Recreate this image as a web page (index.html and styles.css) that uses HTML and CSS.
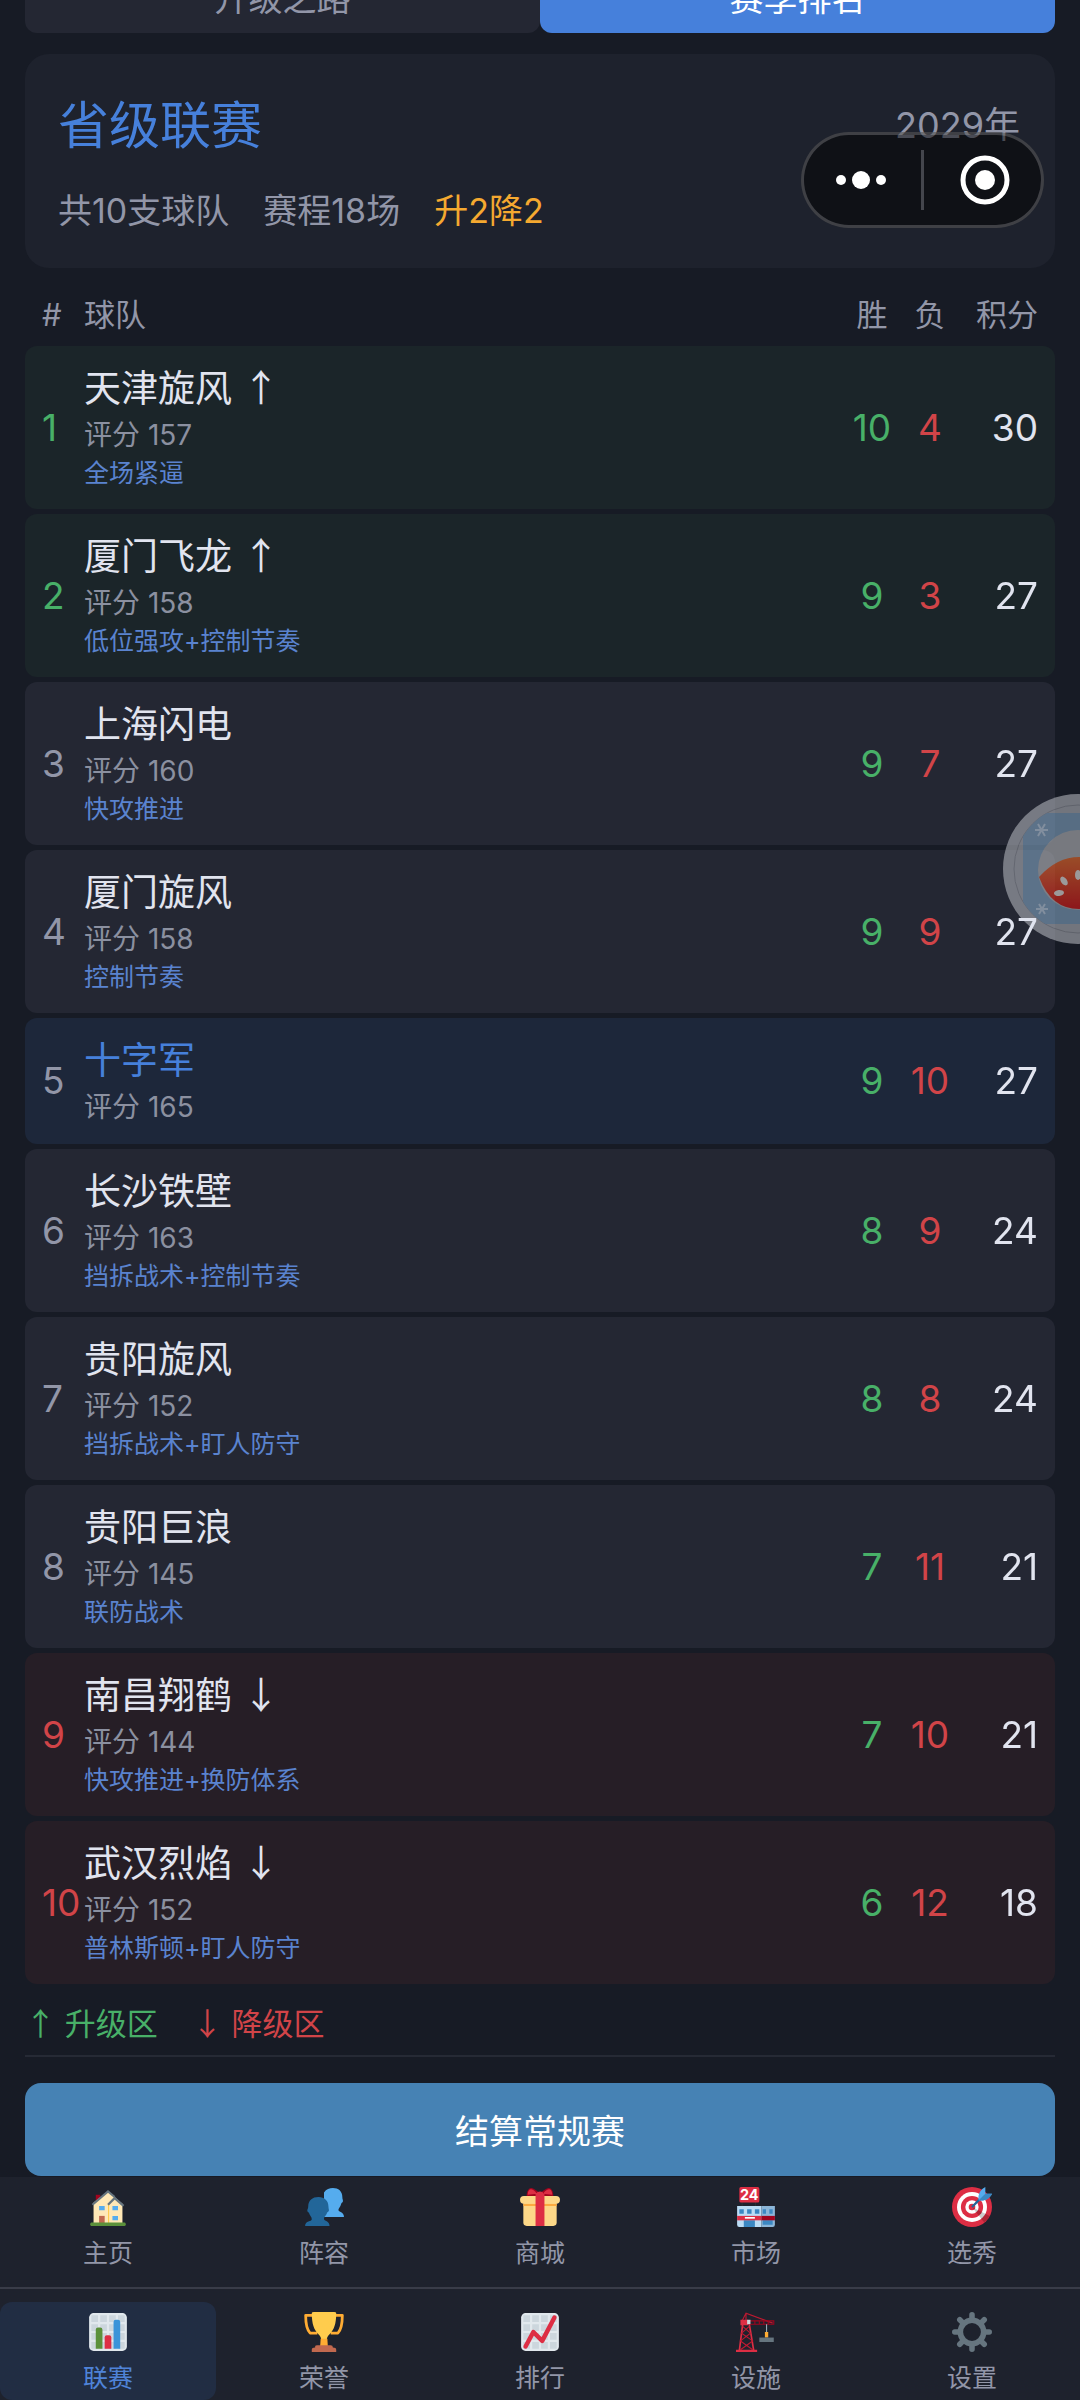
FILE: index.html
```html
<!DOCTYPE html>
<html lang="zh-CN">
<head>
  <meta charset="UTF-8" />
  <title>省级联赛 | 赛季排名</title>
  <meta name="viewport" content="width=device-width, initial-scale=1.0" />
  <link rel="stylesheet" href="styles.css">
</head>
<body>
  <main class="page">
    <div class="tabs">
      <button type="button" class="tab">升级之路</button>
      <button type="button" class="tab tab-active">赛季排名</button>
    </div>

    <section class="league">
      <div class="league-top">
        <h1>省级联赛</h1>
        <span class="year">2029年</span>
      </div>
      <div class="league-info">
        <span>共10支球队</span>
        <span>赛程18场</span>
        <span class="rule">升2降2</span>
      </div>
    </section>

    <table class="ranking">
      <thead>
        <tr>
          <th class="pos">#</th>
          <th class="team">球队</th>
          <th class="win">胜</th>
          <th class="lose">负</th>
          <th class="points">积分</th>
        </tr>
      </thead>
      <tbody>
        <tr class="up">
          <td class="pos">1</td>
          <td class="team"><div class="name">天津旋风 <span class="arrow">↑</span></div><div class="rating">评分 157</div><div class="tactic">全场紧逼</div></td>
          <td class="win">10</td><td class="lose">4</td><td class="points"><span>30</span></td>
        </tr>
        <tr class="up">
          <td class="pos">2</td>
          <td class="team"><div class="name">厦门飞龙 <span class="arrow">↑</span></div><div class="rating">评分 158</div><div class="tactic">低位强攻+控制节奏</div></td>
          <td class="win">9</td><td class="lose">3</td><td class="points"><span>27</span></td>
        </tr>
        <tr>
          <td class="pos">3</td>
          <td class="team"><div class="name">上海闪电</div><div class="rating">评分 160</div><div class="tactic">快攻推进</div></td>
          <td class="win">9</td><td class="lose">7</td><td class="points"><span>27</span></td>
        </tr>
        <tr>
          <td class="pos">4</td>
          <td class="team"><div class="name">厦门旋风</div><div class="rating">评分 158</div><div class="tactic">控制节奏</div></td>
          <td class="win">9</td><td class="lose">9</td><td class="points"><span>27</span></td>
        </tr>
        <tr class="mine">
          <td class="pos">5</td>
          <td class="team"><div class="name">十字军</div><div class="rating">评分 165</div></td>
          <td class="win">9</td><td class="lose">10</td><td class="points"><span>27</span></td>
        </tr>
        <tr>
          <td class="pos">6</td>
          <td class="team"><div class="name">长沙铁壁</div><div class="rating">评分 163</div><div class="tactic">挡拆战术+控制节奏</div></td>
          <td class="win">8</td><td class="lose">9</td><td class="points"><span>24</span></td>
        </tr>
        <tr>
          <td class="pos">7</td>
          <td class="team"><div class="name">贵阳旋风</div><div class="rating">评分 152</div><div class="tactic">挡拆战术+盯人防守</div></td>
          <td class="win">8</td><td class="lose">8</td><td class="points"><span>24</span></td>
        </tr>
        <tr>
          <td class="pos">8</td>
          <td class="team"><div class="name">贵阳巨浪</div><div class="rating">评分 145</div><div class="tactic">联防战术</div></td>
          <td class="win">7</td><td class="lose">11</td><td class="points"><span>21</span></td>
        </tr>
        <tr class="down">
          <td class="pos">9</td>
          <td class="team"><div class="name">南昌翔鹤 <span class="arrow">↓</span></div><div class="rating">评分 144</div><div class="tactic">快攻推进+换防体系</div></td>
          <td class="win">7</td><td class="lose">10</td><td class="points"><span>21</span></td>
        </tr>
        <tr class="down">
          <td class="pos">10</td>
          <td class="team"><div class="name">武汉烈焰 <span class="arrow">↓</span></div><div class="rating">评分 152</div><div class="tactic">普林斯顿+盯人防守</div></td>
          <td class="win">6</td><td class="lose">12</td><td class="points"><span>18</span></td>
        </tr>
      </tbody>
    </table>

    <div class="legend">
      <span class="legend-up"><span class="arrow">↑</span> 升级区</span>
      <span class="legend-down"><span class="arrow">↓</span> 降级区</span>
    </div>

    <button type="button" class="settle">结算常规赛</button>
  </main>

  <nav class="nav">
    <div class="nav-row">
      <a href="#home" class="nav-item">
        <svg class="icon" viewBox="0 0 36 36" aria-hidden="true">
          <path fill="#a0041e" d="M7 7h4v8H7z"/>
          <path fill="#ffe8b6" d="M5 14L18 4l13 11v18H5z"/>
          <path fill="#ffcc4d" d="M18 15h1v18h-1z"/>
          <path fill="none" stroke="#66757f" stroke-width="2" d="M4 16L18 4l6 5M18 16l6-6 8 7"/>
          <path fill="#55acee" d="M10 17h5v4h-5zM22 17h5v4h-5zM22 26h5v4h-5z"/>
          <path fill="#c1694f" d="M10 26h5v7h-5z"/>
          <path fill="#5c913b" d="M3 32h30q1 0 1 1.500T33 35H3q-1 0-1-1.500T3 32z"/>
        </svg>
        <span>主页</span>
      </a>
      <a href="#squad" class="nav-item">
        <svg class="icon" viewBox="0 0 36 36" aria-hidden="true">
          <path fill="#55acee" d="M26 1c5 0 8.500 3 8.500 8 0 2 .8 2.500.5 4-.2 1-1.200 1-1.500 2-.8 3-2.500 4-2.500 5.500 0 2.500 5 1.500 5 6.500H18V5c2-3 5-4 8-4z"/>
          <path fill="#226699" d="M13 9c5.500 0 9 3.500 9 8.500 0 2 .8 3 .3 4.200-.4.900-1.300.8-1.600 1.800-.7 2.500-2.700 3-2.700 5 0 2.500 5 1.500 5 6.500H1c0-5 6-3.500 6-6 0-2-1.800-3-2.500-5.500-.4-1-1.200-1-1.500-2-.3-1.200.8-2 .8-4C3.800 12 7.500 9 13 9z"/>
        </svg>
        <span>阵容</span>
      </a>
      <a href="#shop" class="nav-item">
        <svg class="icon" viewBox="0 0 36 36" aria-hidden="true">
          <path fill="#a0041e" d="M6 8c0-4 2-7 4-7 3 0 6 4 8 4s5-4 8-4c2 0 4 3 4 7z"/>
          <path fill="#fdd888" d="M3 14h30v18q0 3-3 3H6q-3 0-3-3z"/>
          <path fill="#fcab40" d="M3 15h30v2H3z"/>
          <rect fill="#fdd888" x="0" y="8" width="36" height="7" rx="3.500"/>
          <path fill="#dd2e44" d="M14 6q4-4 8 0v29h-8zM7 7c0-4 2-5 3-5 2 0 4 2 5 4zM29 7c0-4-2-5-3-5-2 0-4 2-5 4z"/>
        </svg>
        <span>商城</span>
      </a>
      <a href="#market" class="nav-item">
        <svg class="icon" viewBox="0 0 36 36" aria-hidden="true">
          <path fill="#292f33" d="M5 13h1v5H5zM17 13h1v5h-1z"/>
          <rect fill="#dd2e44" x="3" y="0" width="18" height="14" rx="1.500"/>
          <text class="store-sign" x="12" y="12">24</text>
          <path fill="#bbddf5" d="M1 17h22v19H3q-2 0-2-2z"/>
          <path fill="#8cb6d8" d="M23 17h12v17q0 2-2 2H23z"/>
          <path fill="#3b88c3" d="M3 20h4v4H3zM10 20h4v4h-4zM17 20h4v4h-4zM24 20h3v4h-3zM30 20h3v4h-3zM7 30h10v6H7zM24 30h9v4h-9z"/>
          <path fill="#dd2e44" d="M1 26h22v4H1z"/>
          <path fill="#a0041e" d="M23 26h12v4H23z"/>
          <path fill="#fff" d="M8 27h9v1.500H8z"/>
        </svg>
        <span>市场</span>
      </a>
      <a href="#draft" class="nav-item">
        <svg class="icon" viewBox="0 0 36 36" aria-hidden="true">
          <circle fill="#dd2e44" cx="18" cy="18" r="18"/>
          <circle fill="#fff" cx="18" cy="18" r="13.500"/>
          <circle fill="#dd2e44" cx="18" cy="18" r="10"/>
          <circle fill="#fff" cx="18" cy="18" r="6"/>
          <circle fill="#dd2e44" cx="18" cy="18" r="3"/>
          <path fill="#000" opacity=".2" d="M18 18l11 14a18 18 0 0 0 5-6z"/>
          <path fill="none" stroke="#226699" stroke-width="2" d="M18 18L28 8"/>
          <path fill="#55acee" d="M24 12c-1-6 2-10 6-12v6h6c-2 4-6 7-12 6z"/>
          <path fill="#3b88c3" d="M24 12l6-6h6c-2 4-6 7-12 6z"/>
        </svg>
        <span>选秀</span>
      </a>
    </div>
    <div class="nav-row">
      <a href="#league" class="nav-item nav-active">
        <svg class="icon" viewBox="0 0 36 36" aria-hidden="true">
          <rect fill="#e1e8ed" x="1" y="1" width="34" height="34" rx="4"/>
          <path fill="#ccd6dd" d="M3 3h6v6H3zM11 3h6v6h-6zM19 3h6v6h-6zM27 3h6v6h-6zM3 11h6v6H3zM11 11h6v6h-6zM19 11h6v6h-6zM27 11h6v6h-6zM3 19h6v6H3zM11 19h6v6h-6zM19 19h6v6h-6zM27 19h6v6h-6zM3 27h6v6H3zM11 27h6v6h-6zM19 27h6v6h-6zM27 27h6v6h-6z"/>
          <path fill="#5c913b" d="M7 33V16q0-2 2-2h2q2 0 2 2v17z"/>
          <path fill="#dd2e44" d="M15 33V23q0-2 2-2h2q2 0 2 2v10z"/>
          <path fill="#3b94d9" d="M23 33V9q0-2 2-2h2q2 0 2 2v24z"/>
        </svg>
        <span>联赛</span>
      </a>
      <a href="#honor" class="nav-item">
        <svg class="icon" viewBox="0 0 36 36" aria-hidden="true">
          <path fill="none" stroke="#ffac33" stroke-width="2.500" stroke-linejoin="round" d="M9 3H1.500q0 12 4 16H12M27 3h7.500q0 12-4 16H24"/>
          <path fill="#ffcc4d" d="M7 1q0-1 2-1h18q2 0 2 1c0 10-2 15-6 19-2 2-2.500 3-2.500 6v4h-5v-4c0-3-.5-4-2.500-6C9 16 7 11 7 1z"/>
          <path fill="#ffac33" d="M15 24h6l.5 7h-7z"/>
          <path fill="#c1694f" d="M10 31q0-1 2-1h12q2 0 2 2 3 0 3 2v2H7v-2q0-2 3-2z"/>
        </svg>
        <span>荣誉</span>
      </a>
      <a href="#rank" class="nav-item">
        <svg class="icon" viewBox="0 0 36 36" aria-hidden="true">
          <rect fill="#e1e8ed" x="1" y="1" width="34" height="34" rx="4"/>
          <path fill="#ccd6dd" d="M3 3h6v6H3zM11 3h6v6h-6zM19 3h6v6h-6zM27 3h6v6h-6zM3 11h6v6H3zM11 11h6v6h-6zM19 11h6v6h-6zM27 11h6v6h-6zM3 19h6v6H3zM11 19h6v6h-6zM19 19h6v6h-6zM27 19h6v6h-6zM3 27h6v6H3zM11 27h6v6h-6zM19 27h6v6h-6zM27 27h6v6h-6z"/>
          <path fill="none" stroke="#dd2e44" stroke-width="4" stroke-linecap="round" stroke-linejoin="round" d="M5 31l7-13 8 8L31 5"/>
        </svg>
        <span>排行</span>
      </a>
      <a href="#facility" class="nav-item">
        <svg class="icon" viewBox="0 0 36 36" aria-hidden="true">
          <path fill="none" stroke="#be1931" stroke-width="1" d="M5 9l4-8 24 9M9 1v8"/>
          <path fill="none" stroke="#dd2e44" stroke-width="1.500" d="M6 11L3 35M12 11l4 24"/>
          <path fill="none" stroke="#be1931" stroke-width="1" d="M6 13l7 6-9 7 11 8M12 13l-7 6 10 7-11 8"/>
          <path fill="none" stroke="#a0041e" stroke-width="1" d="M12 8h22v3H12M17 8v3M21 8v3M25 8v3M29 8v3"/>
          <path fill="#dd2e44" d="M4 7h7v5H4zM0 34h19v2H0z"/>
          <path fill="#ccd6dd" d="M10 7h3v4h-3z"/>
          <path fill="#99aab5" d="M27 11h1v7h-1z"/>
          <path fill="#ffac33" d="M26 18h3v5h-3z"/>
          <path fill="#66757f" d="M21 23h13v4H21z"/>
        </svg>
        <span>设施</span>
      </a>
      <a href="#settings" class="nav-item">
        <svg class="icon" viewBox="0 0 36 36" aria-hidden="true">
          <circle fill="none" stroke="#66757f" stroke-width="5" cx="18" cy="18" r="10.500"/>
          <path fill="none" stroke="#66757f" stroke-width="5" stroke-linecap="round" d="M18 2.500V6M18 30v3.500M2.500 18H6M30 18h3.500M7 7l3 3M26 26l3 3M29 7l-3 3M10 26l-3 3"/>
        </svg>
        <span>设置</span>
      </a>
    </div>
  </nav>

  <div class="capsule">
    <button type="button" aria-label="更多">
      <svg viewBox="0 0 50 50" aria-hidden="true">
        <circle cx="5" cy="25" r="5"/>
        <circle cx="25" cy="25" r="9"/>
        <circle cx="45" cy="25" r="5"/>
      </svg>
    </button>
    <button type="button" aria-label="关闭">
      <svg viewBox="0 0 50 50" aria-hidden="true">
        <circle class="ring" cx="25" cy="25" r="22"/>
        <circle cx="25" cy="25" r="10"/>
      </svg>
    </button>
  </div>

  <button type="button" class="float-ball" aria-label="悬浮球">
    <svg viewBox="0 0 150 150" aria-hidden="true">
      <defs>
        <clipPath id="ball"><circle cx="75" cy="75" r="64"/></clipPath>
        <linearGradient id="melon" x1="0" y1="0" x2="0" y2="1">
          <stop offset="0" stop-color="#f2702c"/>
          <stop offset="1" stop-color="#dc1616"/>
        </linearGradient>
      </defs>
      <circle cx="75" cy="75" r="75" fill="#b0b3ba"/>
      <circle cx="75" cy="75" r="64" fill="none" stroke="#8f939b"/>
      <g clip-path="url(#ball)">
        <path fill="#82a5c3" d="M20 19h110v111H20z"/>
        <path fill="#6c8db0" d="M100 106l30 20v-50z"/>
      </g>
      <path stroke="#c0d4e6" stroke-width="2" d="M32 36h13M35 30l7 12M42 30l-7 12M33 115h12M36 110l6 10M42 110l-6 10"/>
      <circle cx="75" cy="76" r="40" fill="#b8babd"/>
      <path fill="url(#melon)" d="M36 83q18-20 40-20t40 20q-12 32-40 32T36 83z"/>
      <g fill="#f4eeea">
        <ellipse cx="61" cy="87" rx="3" ry="5" transform="rotate(-35 61 87)"/>
        <ellipse cx="56" cy="99" rx="3" ry="5" transform="rotate(85 56 99)"/>
        <ellipse cx="75" cy="81" rx="3" ry="5"/>
      </g>
    </svg>
  </button>
</body>
</html>
```

FILE: styles.css
```css
* {
  box-sizing: border-box;
}
body {
  display: flex;
  flex-direction: column;
  min-height: 100vh;
  margin: 0;
  overflow-x: hidden;
  background-color: #171b25;
  color: #e1e4ef;
  font-family: Inter, "Noto Sans CJK SC", sans-serif;
}
button {
  border: none;
  padding: 0;
  font-family: inherit;
  cursor: pointer;
}
.page {
  flex: 1;
  padding: 0 25px;
  overflow: hidden;
}
.arrow {
  font-family: "Noto Sans CJK SC", sans-serif;
  line-height: 1;
}

/* 顶部切换 */
.tabs {
  display: flex;
  margin-top: -41px;
}
.tab {
  flex: 1;
  height: 74px;
  border-radius: 12px;
  background-color: #242733;
  color: #9296a8;
  font-size: 34px;
}
.tab-active {
  background-color: #4680db;
  color: #fff;
}

.league {
  margin: 21px 0 16px;
  padding: 36px 35px 32px 33px;
  border-radius: 24px;
  background-color: #1e222d;
}
.league-top {
  display: flex;
  justify-content: space-between;
  align-items: center;
  height: 64px;
}
.league h1 {
  margin: 0;
  color: #4680db;
  font-size: 51px;
  font-weight: 400;
}
.year {
  color: #9296a8;
  font-size: 36px;
}
.league-info {
  display: flex;
  gap: 34px;
  margin-top: 32px;
  color: #9296a8;
  font-size: 34px;
  line-height: 50px;
}
.league-info .rule {
  color: #f5a930;
}

/* 积分榜 */
.ranking {
  width: 100%;
  border-spacing: 0 5px;
}
.ranking th {
  height: 52px;
  padding: 0;
  color: #9296a8;
  font-size: 31px;
  font-weight: 400;
  line-height: 52px;
  text-align: center;
}
.ranking td {
  padding: 16px 0 17px;
  background-color: #242733;
  font-size: 37px;
  text-align: center;
}
.ranking td:first-child {
  border-radius: 12px 0 0 12px;
}
.ranking td:last-child {
  border-radius: 0 12px 12px 0;
}
.ranking .pos {
  width: 59px;
  max-width: 59px;
  padding-left: 17px;
  text-align: left;
}
.ranking .team {
  text-align: left;
}
.ranking .win,
.ranking .lose {
  width: 58px;
}
.ranking .points {
  width: 96px;
  padding-right: 17px;
  text-align: right;
}
.points span {
  position: relative;
  z-index: 2;
}
.ranking td.pos {
  color: #9296a8;
}
.ranking td.win {
  color: #48b068;
}
.ranking td.lose {
  color: #d14448;
}
.name {
  line-height: 53px;
}
.rating {
  color: #8b90a0;
  font-size: 28px;
  line-height: 40px;
}
.tactic {
  color: #5a83cf;
  font-size: 25px;
  line-height: 37px;
}
.ranking .up td {
  background-color: #1b2529;
}
.ranking .up .pos {
  color: #48b068;
}
.ranking .down td {
  background-color: #261e26;
}
.ranking .down .pos {
  color: #d14448;
}
.ranking .mine td {
  background-color: #1d273a;
}
.mine .name {
  color: #4680db;
}

.legend {
  display: flex;
  gap: 34px;
  padding: 12px 0 8px;
  border-bottom: 2px solid #262a35;
  font-size: 31px;
  line-height: 46px;
}
.legend-up {
  color: #48b068;
}
.legend-down {
  color: #d14448;
}
.settle {
  display: block;
  width: 100%;
  height: 93px;
  margin-top: 26px;
  border-radius: 16px;
  background-color: #4682b4;
  color: #fff;
  font-size: 34px;
}

/* 底部导航 */
.nav {
  background-color: #1e222d;
}
.nav-row {
  display: flex;
}
.nav-row:first-child {
  padding-bottom: 12px;
  border-bottom: 2px solid #393c48;
}
.nav-row:last-child {
  padding-top: 13px;
}
.nav-item {
  display: flex;
  flex: 1;
  flex-direction: column;
  align-items: center;
  gap: 8px;
  height: 98px;
  padding-top: 10px;
  border-radius: 12px;
  color: #9296a8;
  font-size: 25px;
  line-height: 37px;
  text-decoration: none;
}
.nav-active {
  background-color: #212d43;
  color: #4f83d8;
}
.icon {
  width: 40px;
  height: 40px;
}
.store-sign {
  fill: #fff;
  font-size: 13px;
  font-weight: 700;
  text-anchor: middle;
}

/* 右上角胶囊按钮 */
.capsule {
  position: fixed;
  top: 132px;
  right: 36px;
  display: flex;
  align-items: center;
  width: 243px;
  height: 96px;
  border: 3px solid rgba(255, 255, 255, 0.2);
  border-radius: 48px;
  background-color: rgba(0, 0, 0, 0.5);
}
.capsule button {
  flex: 1;
  height: 60px;
  padding-right: 4px;
  background: none;
}
.capsule button + button {
  padding: 0 0 0 4px;
  border-left: 3px solid #44464d;
}
.capsule svg {
  display: block;
  width: 50px;
  height: 50px;
  margin: 0 auto;
  fill: #fff;
}
.capsule .ring {
  fill: none;
  stroke: #fff;
  stroke-width: 5;
}
.float-ball {
  position: fixed;
  top: 794px;
  right: -73px;
  z-index: 1;
  width: 150px;
  height: 150px;
  border-radius: 50%;
  background: none;
  opacity: 0.6;
}
```
